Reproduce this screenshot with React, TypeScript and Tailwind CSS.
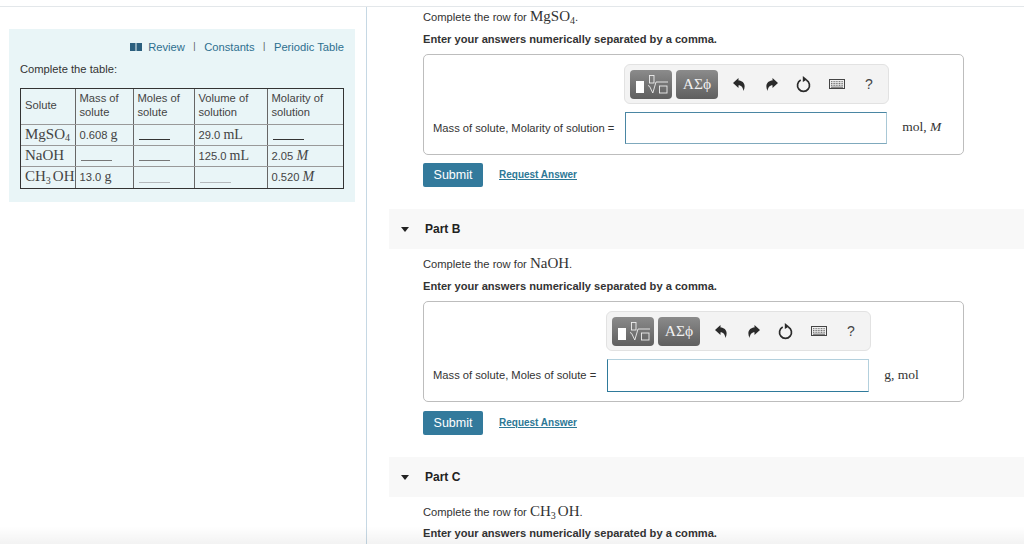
const sans = "font-['Liberation_Sans',Arial,sans-serif]"
const serif = "font-['Liberation_Serif',serif]"

const Mgso4 = () => (
  <span className={`${serif} text-[15px]`}>
    MgSO<sub className="text-[10px]">4</sub>
  </span>
)

const Ch3oh = () => (
  <span className={`${serif} text-[15px]`}>
    CH<sub className="text-[10px]">3</sub>
    <span className="ml-[2px]">OH</span>
  </span>
)

const Blank = ({ tone = "bg-[#333]" }: { tone?: string }) => (
  <div className={`w-[31px] h-px mt-[10px] ml-[1px] ${tone}`} />
)

const Unit = ({ children }: { children: React.ReactNode }) => (
  <span className={`${serif} text-[14px]`}>{children}</span>
)

const mid = "bg-[#777]"
const light = "bg-[#b4b8bb]"

const rows = [
  { solute: <Mgso4 />, mass: <>0.608 <Unit>g</Unit></>, moles: <Blank />, volume: <>29.0 <Unit>mL</Unit></>, molarity: <Blank /> },
  { solute: <span className={`${serif} text-[15px]`}>NaOH</span>, mass: <Blank tone={mid} />, moles: <Blank tone={mid} />, volume: <>125.0 <Unit>mL</Unit></>, molarity: <>2.05 <Unit><i>M</i></Unit></> },
  { solute: <Ch3oh />, mass: <>13.0 <Unit>g</Unit></>, moles: <Blank tone={light} />, volume: <Blank tone={light} />, molarity: <>0.520 <Unit><i>M</i></Unit></> },
]

const cell = "border border-x-[#666] border-y-[#999] pl-[4px] first:border-l-0 last:border-r-0"

const TemplateIcon = () => (
  <svg width="42" height="29" viewBox="0 0 42 29" fill="none">
    <rect x="6" y="11" width="8" height="12" fill="#fff" />
    <rect x="19.5" y="5.5" width="4.5" height="7.5" stroke="#eee" strokeWidth="0.9" />
    <path d="M18 15.5l1.6.8 3.2 6.7 3.2-11h12" stroke="#eee" strokeWidth="0.9" />
    <rect x="29.5" y="16" width="7.5" height="7" stroke="#eee" strokeWidth="0.9" />
  </svg>
)

const UndoIcon = ({ flip }: { flip?: boolean }) => (
  <svg width="12" height="13" viewBox="0 0 12 13" className={flip ? "-scale-x-100" : ""}>
    <path d="M0 5L5.5 0v2.6c4.5 0 8 3.9 5 10.4-.5-3.5-2-5.8-5-5.8V10z" fill="#2a2a2a" />
  </svg>
)

const ResetIcon = () => (
  <svg width="15" height="18" viewBox="0 0 15 18" fill="none">
    <path d="M4.7 5a6 6 0 1 0 5.6 0" stroke="#2a2a2a" strokeWidth="1.7" />
    <path d="M6.8 1l4.4 3.4-4.4 2.6z" fill="#2a2a2a" />
  </svg>
)

const KeyboardIcon = () => (
  <svg width="16" height="10" viewBox="0 0 16 10" fill="none">
    <rect x="0.5" y="0.5" width="15" height="9" fill="#f0f0f0" stroke="#444" />
    <path d="M2 2.7h12M2 4.6h12M2 6.3h12" stroke="#666" strokeWidth="1" strokeDasharray="1 0.6" />
    <path d="M2 8.2h12" stroke="#555" />
  </svg>
)

const Toolbar = () => (
  <div className="w-[265px] h-[40px] shrink-0 bg-[#f3f3f3] border border-[#e2e2e2] rounded-[6px] flex items-center pl-[5px]">
    <div className="w-[42px] h-[29px] rounded-[4px] bg-gradient-to-b from-[#8b8b8b] to-[#5f5f5f] flex items-center justify-center">
      <TemplateIcon />
    </div>
    <div className={`ml-[4px] w-[42px] h-[29px] rounded-[4px] bg-gradient-to-b from-[#8b8b8b] to-[#5f5f5f] flex items-center justify-center text-[#f0f0f0] text-[15.5px] ${serif}`}>
      ΑΣϕ
    </div>
    <div className="ml-[15px]"><UndoIcon /></div>
    <div className="ml-[21px]"><UndoIcon flip /></div>
    <div className="ml-[18px]"><ResetIcon /></div>
    <div className="ml-[18px]"><KeyboardIcon /></div>
    <span className={`ml-[20px] text-[14px] text-[#444] ${sans}`}>?</span>
  </div>
)

const AnswerBox = ({
  label,
  unit,
  inputBorder,
  pad,
  unitTop,
}: {
  label: string
  unit: React.ReactNode
  inputBorder: string
  pad: string
  unitTop: string
}) => (
  <div className="w-[541px] h-[101px] border border-[#bdbdbd] rounded-[5px] flex flex-col">
    <div className={`flex mt-[9px] ${pad}`}>
      <Toolbar />
    </div>
    <div className="flex items-center pl-[9px] mt-[8px]">
      <span className="text-[11.2px] text-[#333]">{label}</span>
      <div className={`w-[262px] ml-[11px] bg-white ${inputBorder}`} />
      <span className={`${serif} text-[13.5px] text-[#333] ml-[15px] ${unitTop}`}>{unit}</span>
    </div>
  </div>
)

const Actions = ({ top }: { top: string }) => (
  <div className={`flex items-center ${top}`}>
    <button className="w-[60px] h-[24px] rounded-[2px] bg-[#337a9c] text-white text-[12.5px]">Submit</button>
    <a className="ml-[16px] text-[10px] font-bold text-[#2d7896] underline -mt-[1px]">Request Answer</a>
  </div>
)

const PartHeader = ({ name }: { name: string }) => (
  <div className="-ml-[34px] h-[40px] w-[635px] bg-[#f8f8f8] flex items-center pl-[12px]">
    <div className="w-0 h-0 border-l-[4.5px] border-r-[4.5px] border-t-[5px] border-l-transparent border-r-transparent border-t-[#222]" />
    <span className="ml-[16px] text-[12px] font-bold text-[#222]">{name}</span>
  </div>
)

const Prompt = ({ children, top, gap = "mt-[7px]" }: { children: React.ReactNode; top: string; gap?: string }) => (
  <div className={top}>
    <p className="text-[11.2px] leading-[16px] h-[16px] text-[#333]">Complete the row for {children}</p>
    <p className={`text-[11.12px] leading-[16px] font-bold text-[#333] ${gap}`}>Enter your answers numerically separated by a comma.</p>
  </div>
)

export default function App() {
  return (
    <div className={`relative h-[544px] w-[1024px] overflow-hidden bg-white flex flex-col ${sans}`}>
      <div className="h-[7px] shrink-0 border-b border-[#e3e7ea]" />
      <div className="flex flex-1 min-h-0">
        <aside className="w-[367px] shrink-0 border-r border-[#c6d8e4] pt-[22px] pl-[9px]">
          <div className="w-[346px] h-[173px] bg-[#e9f5f7] pt-[11px] pl-[11px]">
            <div className="flex items-center justify-end pr-[11px] h-[14px] text-[11.2px] text-[#2d6f8f]">
              <svg width="12" height="8" viewBox="0 0 12 8" className="mr-[6px]">
                <path d="M0 0h5.5v8H0zM6.5 0H12v8H6.5z" fill="#2b5f7e" />
              </svg>
              <span>Review</span>
              <span className="mx-[8.5px] text-[#555] text-[9px]">|</span>
              <span>Constants</span>
              <span className="mx-[8.5px] text-[#555] text-[9px]">|</span>
              <span>Periodic Table</span>
            </div>
            <p className="mt-[8px] text-[11.2px] leading-[14px] text-[#333]">Complete the table:</p>
            <div className="mt-[12px] w-[324px] border border-[#333]">
              <table className="border-collapse table-fixed w-full text-[11.2px] text-[#444]">
                <colgroup>
                  <col className="w-[54px]" />
                  <col className="w-[58px]" />
                  <col className="w-[61px]" />
                  <col className="w-[73px]" />
                  <col className="w-[76px]" />
                </colgroup>
                <thead>
                  <tr className="h-[35px] leading-[14px] text-left">
                    <th className={`${cell} font-normal border-t-0 pb-[2px]`}>Solute</th>
                    <th className={`${cell} font-normal border-t-0 pb-[2px]`}>Mass of<br />solute</th>
                    <th className={`${cell} font-normal border-t-0 pb-[2px]`}>Moles of<br />solute</th>
                    <th className={`${cell} font-normal border-t-0 pb-[2px]`}>Volume of<br />solution</th>
                    <th className={`${cell} font-normal border-t-0 pb-[2px]`}>Molarity of<br />solution</th>
                  </tr>
                </thead>
                <tbody>
                  {rows.map((row, index) => (
                    <tr key={index} className="h-[21.3px] leading-[13px] [&:last-child>td]:border-b-0">
                      <td className={`${cell} whitespace-nowrap`}>{row.solute}</td>
                      <td className={cell}>{row.mass}</td>
                      <td className={cell}>{row.moles}</td>
                      <td className={cell}>{row.volume}</td>
                      <td className={cell}>{row.molarity}</td>
                    </tr>
                  ))}
                </tbody>
              </table>
            </div>
          </div>
        </aside>
        <main className="flex-1 min-w-0 pl-[56px]">
          <Prompt top="mt-[1px]">
            <Mgso4 />.
          </Prompt>
          <div className="mt-[7px]">
            <AnswerBox
              label="Mass of solute, Molarity of solution ="
              unit={<>mol, <i>M</i></>}
              inputBorder="h-[32px] border border-[#4a86a3] border-b-[#7fa9bd] border-r-[#a9c8d6]"
              pad="pl-[200px]"
              unitTop="-mt-[2px]"
            />
          </div>
          <Actions top="mt-[8px]" />
          <div className="mt-[22px]"><PartHeader name="Part B" /></div>
          <Prompt top="mt-[6px]">
            <span className={`${serif} text-[15px]`}>NaOH</span>.
          </Prompt>
          <div className="mt-[7px]">
            <AnswerBox
              label="Mass of solute, Moles of solute ="
              unit="g, mol"
              inputBorder="h-[33px] border border-[#b3d0dd] border-b-[#2f7a9b] border-l-[#2f7a9b]"
              pad="pl-[182px]"
              unitTop="mt-0"
            />
          </div>
          <Actions top="mt-[9px]" />
          <div className="mt-[22px]"><PartHeader name="Part C" /></div>
          <Prompt top="mt-[6px]" gap="mt-[6px]">
            <Ch3oh />.
          </Prompt>
        </main>
      </div>
      <div className="absolute bottom-0 inset-x-0 h-[18px] bg-gradient-to-t from-black/5 to-transparent pointer-events-none" />
    </div>
  )
}
